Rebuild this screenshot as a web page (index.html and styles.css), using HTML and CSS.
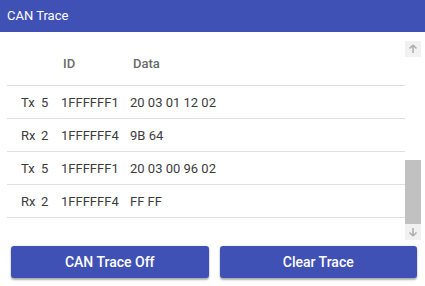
FILE: index.html
```html
<!DOCTYPE html>
<html>
<head>
<meta charset="utf-8">
<link rel="stylesheet" href="styles.css">
</head>
<body>
<header class="appbar">CAN Trace</header>
<section class="content">
  <div class="list">
    <div class="row head">
      <span></span><span></span><span>ID</span><span>Data</span>
    </div>
    <div class="row"><span>Tx</span><span>5</span><span>1FFFFFF1</span><span>20 03 01 12 02</span></div>
    <div class="row"><span>Rx</span><span>2</span><span>1FFFFFF4</span><span>9B 64</span></div>
    <div class="row"><span>Tx</span><span>5</span><span>1FFFFFF1</span><span>20 03 00 96 02</span></div>
    <div class="row"><span>Rx</span><span>2</span><span>1FFFFFF4</span><span>FF FF</span></div>
  </div>
  <div class="scrollbar">
    <div class="sb-btn">
      <svg width="16" height="16" viewBox="0 0 16 16"><path d="M8 4 L4.5 7.5 M8 4 L11.5 7.5 M8 4 V12" stroke="#b0b0b0" stroke-width="1.6" fill="none"/></svg>
    </div>
    <div class="sb-track"><div class="sb-thumb"></div></div>
    <div class="sb-btn">
      <svg width="16" height="16" viewBox="0 0 16 16"><path d="M8 12 L4.5 8.5 M8 12 L11.5 8.5 M8 12 V4" stroke="#b0b0b0" stroke-width="1.6" fill="none"/></svg>
    </div>
  </div>
</section>
<footer class="actions">
  <button class="btn">CAN Trace Off</button>
  <button class="btn">Clear Trace</button>
</footer>
</body>
</html>
```
FILE: styles.css
```css
html, body {
  margin: 0;
  padding: 0;
  width: 425px;
  height: 286px;
  background: #ffffff;
  font-family: Roboto, "Liberation Sans", sans-serif;
  overflow: hidden;
}
.appbar {
  height: 32px;
  background: #3f51b5;
  color: #ffffff;
  font-size: 13px;
  line-height: 31px;
  padding-left: 7px;
  box-sizing: border-box;
}
.content {
  display: flex;
  padding: 9px 4px 0 7px;
  height: 208px;
  box-sizing: border-box;
}
.list {
  width: 398px;
}
.row {
  display: grid;
  grid-template-columns: 20px 20px 69px 1fr;
  padding-left: 14px;
  height: 33px;
  align-items: center;
  border-bottom: 1px solid #e0e0e0;
  box-sizing: border-box;
  font-size: 13px;
  color: #3c3c3c;
}
.row.head {
  height: 45px;
  font-weight: 500;
  color: #6b6b6b;
}
.row.head span:nth-child(3) { padding-left: 2px; }
.row.head span:nth-child(4) { padding-left: 3px; }
.scrollbar {
  width: 16px;
  display: flex;
  flex-direction: column;
}
.sb-btn {
  height: 16px;
  background: #f1f1f1;
  display: flex;
}
.sb-track {
  flex: 1;
  display: flex;
  flex-direction: column;
  justify-content: flex-end;
}
.sb-thumb {
  height: 64px;
  background: #c1c1c1;
}
.actions {
  display: flex;
  gap: 11px;
  padding: 6px 8px 0 11px;
}
.btn {
  flex: 1;
  height: 32px;
  border: none;
  border-radius: 3px;
  background: #3f51b5;
  color: #ffffff;
  font-family: Roboto, "Liberation Sans", sans-serif;
  font-size: 14px;
  font-weight: 500;
  box-shadow: 0 2px 2px rgba(0,0,0,0.3), 0 0 2px rgba(0,0,0,0.15);
  padding: 0;
}
```
